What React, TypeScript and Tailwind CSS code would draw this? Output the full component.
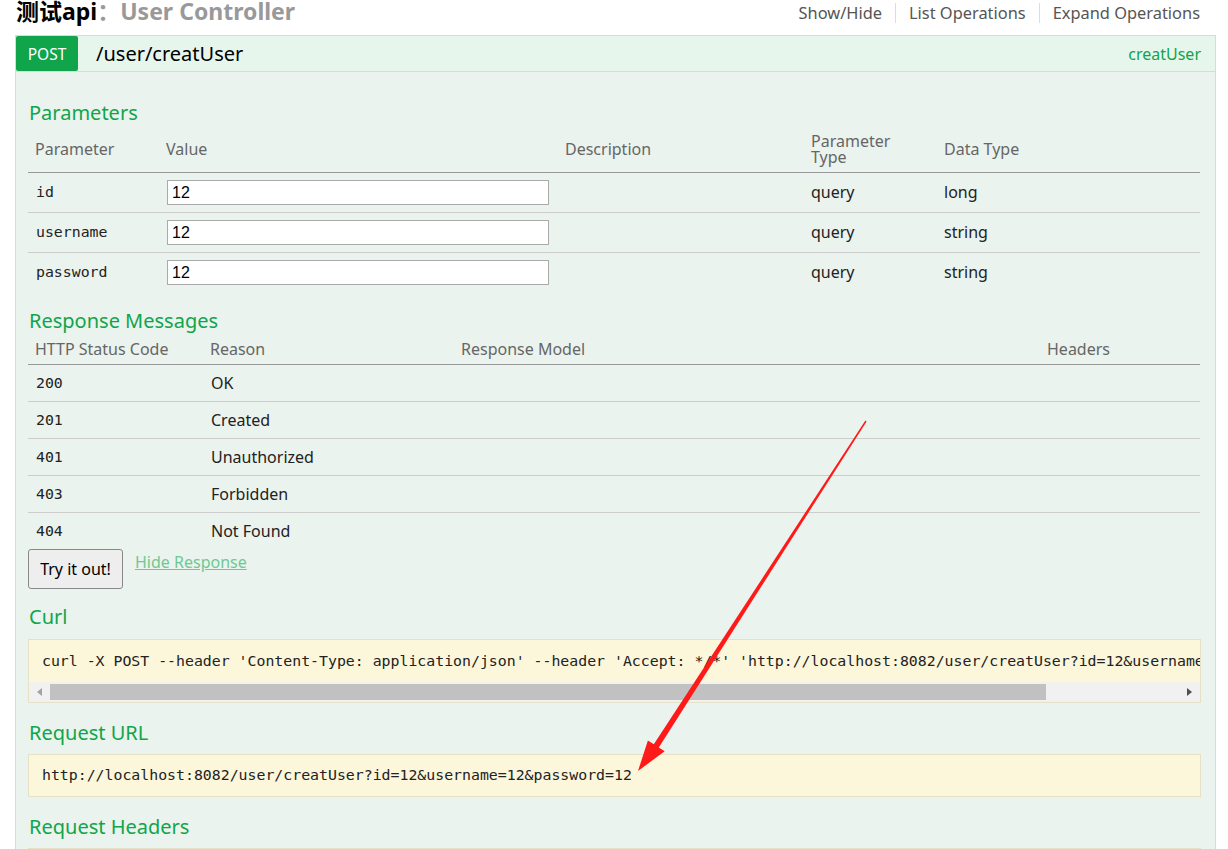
const sans = "font-['Noto_Sans','Noto_Sans_CJK_SC',sans-serif]"
const mono = "font-['DejaVu_Sans_Mono',monospace]"

const params = [
  { name: "id", type: "long" },
  { name: "username", type: "string" },
  { name: "password", type: "string" },
]

const responses = [
  { code: "200", reason: "OK" },
  { code: "201", reason: "Created" },
  { code: "401", reason: "Unauthorized" },
  { code: "403", reason: "Forbidden" },
  { code: "404", reason: "Not Found" },
]

const Heading = ({ children }: { children: string }) => (
  <h4 className="h-[28px] text-[20px] leading-[28px] text-[#10a54a] pl-[1px]">{children}</h4>
)

const Arrow = () => (
  <svg className="absolute left-0 top-0 pointer-events-none" width="1228" height="849">
    <polygon
      fill="#ff1a1a"
      points="638,771 664.7,751.2 658.8,747.4 866.6,421.4 865.4,420.6 653.8,744.2 647.9,740.4"
    />
  </svg>
)

export default function App() {
  return (
    <div className={`relative w-[1228px] h-[849px] overflow-hidden bg-white text-[#222] ${sans}`}>
      {/* title row */}
      <div className="flex items-start justify-between h-[35px] pl-[16px] pr-[28px]">
        <h2 className="text-[23px] leading-[22px] font-bold">
          <span className="text-black">测试api</span>
          <span className="text-[#999]">：User Controller</span>
        </h2>
        <ul className="flex items-center mt-[3px] text-[16.4px] leading-[20px] text-[#555]">
          <li className="pr-[13px]">Show/Hide</li>
          <li className="px-[13px] border-l border-[#ddd]">List Operations</li>
          <li className="pl-[13px] border-l border-[#ddd]">Expand Operations</li>
        </ul>
      </div>

      {/* operation */}
      <div className="ml-[15px] w-[1201px] border border-[#c3e8d1] border-b-0">
        <div className="flex items-center h-[36px] bg-[#e7f6ec] border-b border-[#c3e8d1]">
          <span className="flex items-center justify-center w-[62px] h-[35px] pt-[2px] bg-[#10a54a] text-white text-[15.5px] rounded-[2px]">
            POST
          </span>
          <span className="ml-[18px] text-[20px] text-black">/user/creatUser</span>
          <span className="ml-auto mr-[14px] text-[16px] text-[#10a54a]">creatUser</span>
        </div>

        <div className="bg-[#ebf3ee] pt-[27px] pl-[12px] pr-[14px] h-[800px]">
          <Heading>Parameters</Heading>
          <table className="w-[1172px] table-fixed border-collapse">
            <colgroup>
              <col className="w-[132px]" />
              <col className="w-[399px]" />
              <col className="w-[246px]" />
              <col className="w-[133px]" />
              <col />
            </colgroup>
            <thead>
              <tr className="h-[45px] border-b border-[#999] text-[16px] text-[#666] text-left">
                <th className="font-normal pl-[7px]">Parameter</th>
                <th className="font-normal pl-[6px]">Value</th>
                <th className="font-normal pl-[6px]">Description</th>
                <th className="font-normal pl-[6px] leading-[16px]">Parameter<br />Type</th>
                <th className="font-normal pl-[6px]">Data Type</th>
              </tr>
            </thead>
            <tbody>
              {params.map((p, i) => (
                <tr key={p.name} className={`h-[40px] text-[16px] ${i < 2 ? "border-b border-[#ccc]" : ""}`}>
                  <td className={`pl-[8px] text-[14.85px] ${mono}`}>{p.name}</td>
                  <td className="pl-[7px]">
                    <div className="w-[382px] h-[25px] bg-white border border-[#aaa] pl-[4px] text-[16px] leading-[23px] text-black font-['Liberation_Sans',sans-serif]">
                      12
                    </div>
                  </td>
                  <td />
                  <td className="pl-[6px]">query</td>
                  <td className="pl-[6px]">{p.type}</td>
                </tr>
              ))}
            </tbody>
          </table>

          <div className="mt-[15px]">
            <Heading>Response Messages</Heading>
          </div>
          <table className="w-[1172px] table-fixed border-collapse">
            <colgroup>
              <col className="w-[176px]" />
              <col className="w-[251px]" />
              <col className="w-[586px]" />
              <col />
            </colgroup>
            <thead>
              <tr className="h-[29px] border-b border-[#999] text-[16px] text-[#666] text-left">
                <th className="font-normal pl-[7px]">HTTP Status Code</th>
                <th className="font-normal pl-[6px]">Reason</th>
                <th className="font-normal pl-[6px]">Response Model</th>
                <th className="font-normal pl-[6px]">Headers</th>
              </tr>
            </thead>
            <tbody>
              {responses.map((r, i) => (
                <tr key={r.code} className={`h-[37px] text-[16px] ${i < 4 ? "border-b border-[#ccc]" : ""}`}>
                  <td className={`pl-[8px] pt-[1px] text-[14.85px] ${mono}`}>{r.code}</td>
                  <td className="pl-[7px]">{r.reason}</td>
                  <td />
                  <td />
                </tr>
              ))}
            </tbody>
          </table>

          <div className="flex items-start gap-[12px]">
            <button className="w-[95px] h-[40px] bg-[#eee] border border-[#888] rounded-[3px] text-[16px] text-black">
              Try it out!
            </button>
            <a className="mt-[1px] text-[16px] text-[#6fc893] underline">Hide Response</a>
          </div>

          <div className="mt-[14px]">
            <Heading>Curl</Heading>
          </div>
          <div className="mt-[8px] w-[1173px] border border-[#e5e0c6] bg-[#fcf6db]">
            <div className={`h-[42px] pl-[13px] flex items-center overflow-hidden whitespace-nowrap text-[14.85px] ${mono}`}>
              curl -X POST --header 'Content-Type: application/json' --header 'Accept: */*' 'http://localhost:8082/user/creatUser?id=12&amp;username=12&amp;password=12'
            </div>
            <div className="flex items-center h-[20px] bg-[#f1f1f1]">
              <span className="w-[21px] flex justify-center">
                <svg width="5" height="8" viewBox="0 0 5 8"><polygon points="5,0 5,8 0,4" fill="#a3a3a3" /></svg>
              </span>
              <span className="w-[996px] h-[16px] bg-[#c1c1c1]" />
              <span className="ml-auto w-[21px] flex justify-center">
                <svg width="5" height="8" viewBox="0 0 5 8"><polygon points="0,0 0,8 5,4" fill="#505050" /></svg>
              </span>
            </div>
          </div>

          <div className="mt-[16px]">
            <Heading>Request URL</Heading>
          </div>
          <div className={`mt-[7px] w-[1173px] h-[43px] border border-[#e5e0c6] bg-[#fcf6db] pl-[13px] flex items-center text-[14.85px] ${mono}`}>
            http://localhost:8082/user/creatUser?id=12&amp;username=12&amp;password=12
          </div>

          <div className="mt-[16px]">
            <Heading>Request Headers</Heading>
          </div>
          <div className="mt-[7px] w-[1173px] h-[43px] border border-[#e5e0c6] bg-[#fcf6db]" />
        </div>
      </div>

      <Arrow />
    </div>
  )
}
